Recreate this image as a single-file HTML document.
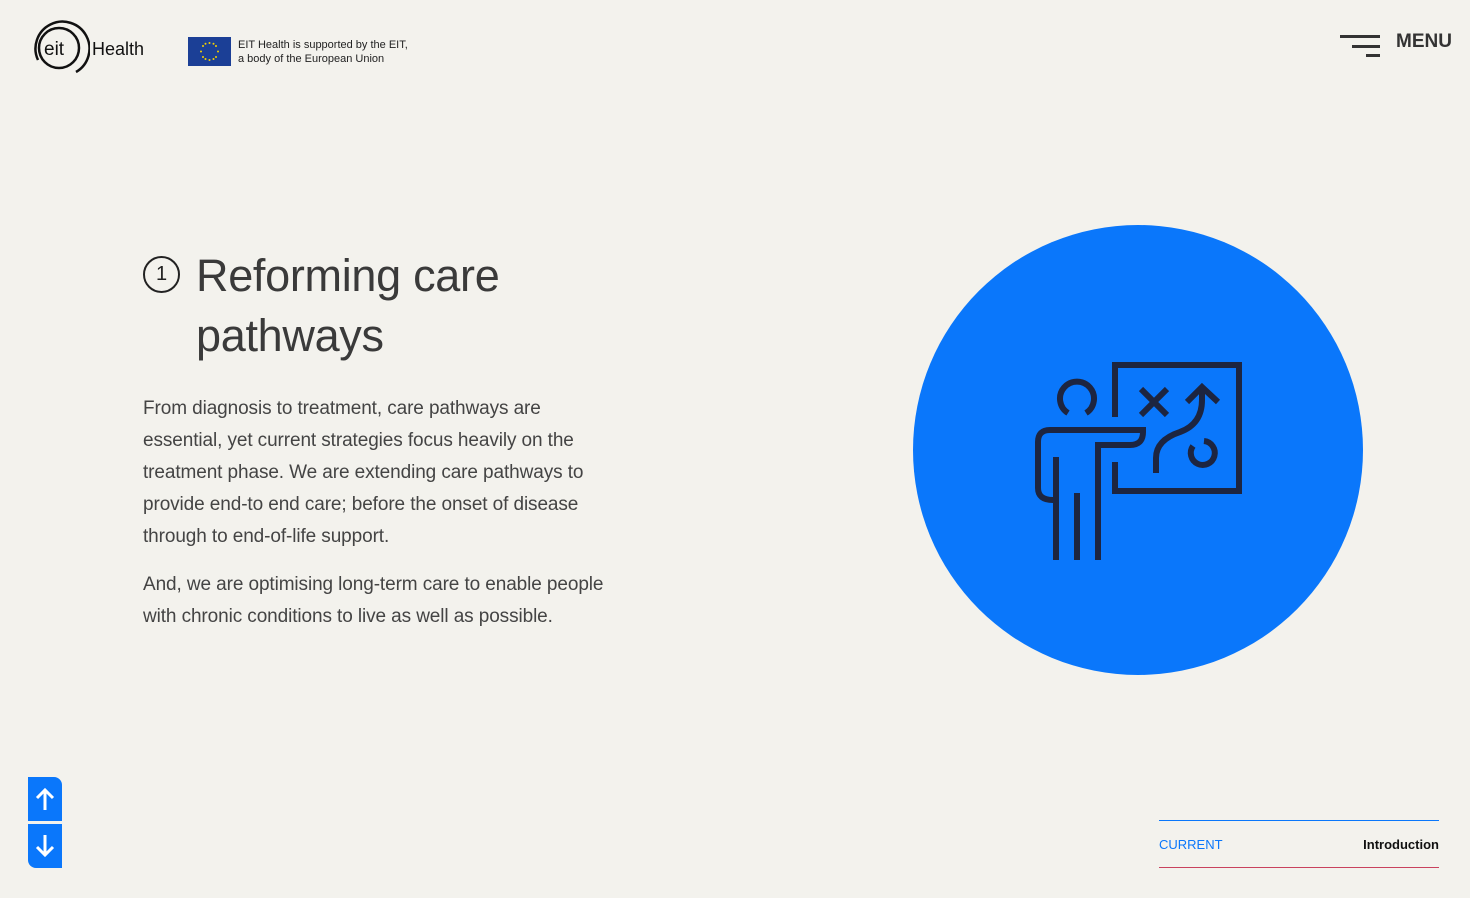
<!DOCTYPE html>
<html><head><meta charset="utf-8"><style>
*{margin:0;padding:0;box-sizing:border-box}
body{width:1470px;height:898px;background:#f3f2ed;font-family:"Liberation Sans",sans-serif;color:#3b3b3b;position:relative;overflow:hidden}
.abs{position:absolute}
h1{position:absolute;left:196px;top:246px;font-weight:400;font-size:45px;line-height:60px;color:#3a3a3a;letter-spacing:-0.3px}
.num{position:absolute;left:143px;top:256px;width:37px;height:37px;border:2px solid #222;border-radius:50%;font-size:20px;text-align:center;line-height:33px;color:#222}
.p{position:absolute;left:143px;font-size:19px;line-height:32px;color:#444;letter-spacing:-0.1px}
</style></head><body>
<svg class="abs" style="left:28px;top:20px" width="62" height="60" viewBox="0 0 62 60">
<circle cx="31" cy="28" r="20" fill="none" stroke="#111" stroke-width="2.5"/>
<path d="M10 40 A27 27 0 1 1 48 52" fill="none" stroke="#111" stroke-width="2.5"/>
<text x="16" y="35" font-family="Liberation Sans" font-size="19" fill="#111">eit</text>
</svg>
<div class="abs" style="left:92px;top:39px;font-size:18px;color:#111">Health</div>
<div class="abs" style="left:188px;top:37px;width:43px;height:29px;background:#1b3f96">
<svg width="43" height="29"><g fill="#f5d000"><circle cx="21.5" cy="6" r="1"/><circle cx="21.5" cy="23" r="1"/><circle cx="13" cy="14.5" r="1"/><circle cx="30" cy="14.5" r="1"/><circle cx="15" cy="9" r="1"/><circle cx="28" cy="9" r="1"/><circle cx="15" cy="20" r="1"/><circle cx="28" cy="20" r="1"/><circle cx="17.5" cy="6.8" r="1"/><circle cx="25.5" cy="6.8" r="1"/><circle cx="17.5" cy="22" r="1"/><circle cx="25.5" cy="22" r="1"/></g></svg></div>
<div class="abs" style="left:238px;top:38px;font-size:11px;line-height:14px;color:#222">EIT Health is supported by the EIT,<br>a body of the European Union</div>
<div class="abs" style="left:1340px;top:35px;width:40px;height:3px;background:#333"></div>
<div class="abs" style="left:1352px;top:45px;width:28px;height:3px;background:#333"></div>
<div class="abs" style="left:1366px;top:54px;width:14px;height:3px;background:#333"></div>
<div class="abs" style="left:1396px;top:31px;font-size:19px;font-weight:700;color:#333">MENU</div>
<div class="num">1</div>
<h1>Reforming care<br>pathways</h1>
<div class="p" style="top:393px">From diagnosis to treatment, care pathways are<br>essential, yet current strategies focus heavily on the<br>treatment phase. We are extending care pathways to<br>provide end-to end care; before the onset of disease<br>through to end-of-life support.</div>
<div class="p" style="top:569px">And, we are optimising long-term care to enable people<br>with chronic conditions to live as well as possible.</div>
<div class="abs" style="left:913px;top:225px;width:450px;height:450px;border-radius:50%;background:#0a77fb"></div>
<svg class="abs" style="left:0;top:0" width="1470" height="898">
<g fill="none" stroke="#1d2540" stroke-width="6">
<path d="M1115 417 V365 H1239 V491 H1115 V462"/>
<path d="M1068 413 A17 17 0 1 1 1086 413"/>
<path d="M1056 560 V457"/>
<path d="M1077 560 V493"/>
<path d="M1098 560 V445 H1130 Q1143 445 1143 432 V430 H1050 Q1038 430 1038 442 V488 Q1038 500 1053 500"/>
<path d="M1141 389 L1167 415 M1167 389 L1141 415"/>
<path d="M1156 473 V458 Q1156 440 1180 432 Q1202 424 1202 400 V388"/>
<path d="M1187 402 L1202 387 L1218 402"/>
<path d="M1193 446 A12 12 0 1 0 1204 441"/>
</g></svg>
<div class="abs" style="left:28px;top:777px;width:34px;height:44px;background:#0a77fb;border-radius:0 8px 0 0"></div>
<div class="abs" style="left:28px;top:824px;width:34px;height:44px;background:#0a77fb;border-radius:0 0 0 8px"></div>
<svg class="abs" style="left:28px;top:777px" width="34" height="91"><g fill="none" stroke="#fff" stroke-width="3"><path d="M17 33 V13 M9 21 L17 13 L25 21"/><path d="M17 58 V78 M9 70 L17 78 L25 70"/></g></svg>
<div class="abs" style="left:1159px;top:820px;width:280px;height:1px;background:#0a77fb"></div>
<div class="abs" style="left:1159px;top:867px;width:280px;height:1px;background:#c9425e"></div>
<div class="abs" style="left:1159px;top:837px;font-size:13px;color:#0a77fb">CURRENT</div>
<div class="abs" style="left:1439px;top:837px;font-size:13px;color:#111;font-weight:700;transform:translateX(-100%)">Introduction</div>
</body></html>
